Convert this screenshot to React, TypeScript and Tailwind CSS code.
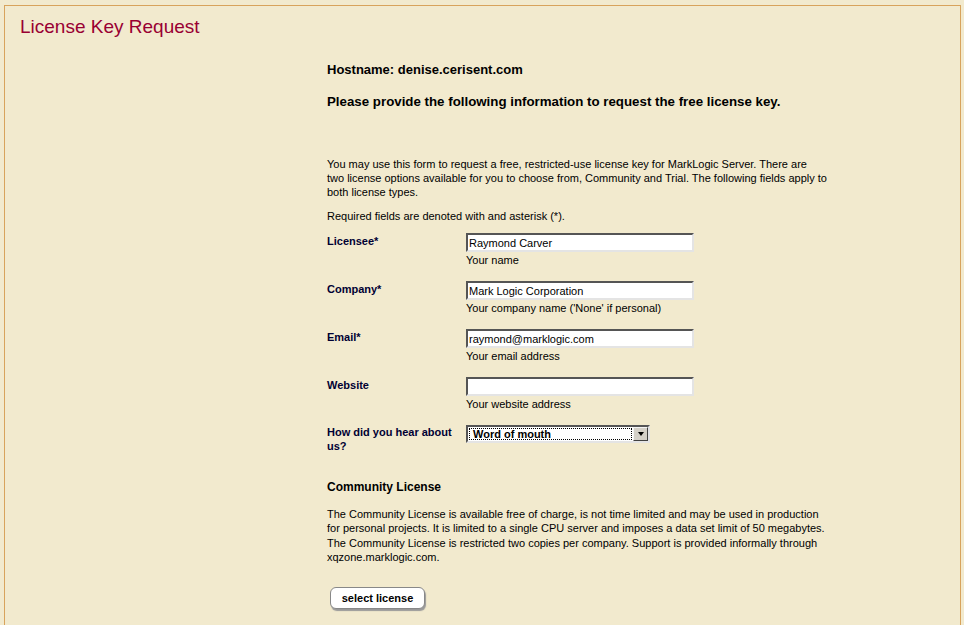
const FIELDS = [
  { label: "Licensee*", value: "Raymond Carver", help: "Your name" },
  { label: "Company*", value: "Mark Logic Corporation", help: "Your company name ('None' if personal)" },
  { label: "Email*", value: "raymond@marklogic.com", help: "Your email address" },
  { label: "Website", value: "", help: "Your website address" },
];

export default function App() {
  return (
    <div className="min-h-screen bg-[#f2eace] pt-[5px] pl-[4px] pr-[3px] font-['Liberation_Sans',Arial,sans-serif] text-black">
      <div className="border-t border-l border-r border-[#d8a35c] h-[700px]">
        {/* titulo */}
        <h1 className="pl-[15px] pt-[9px] text-[19px] leading-[24px] text-[#990033]">License Key Request</h1>

        <main className="ml-[322px] w-[500px]">
          <p className="mt-[23px] text-[13px] leading-[16px] font-bold">Hostname: denise.cerisent.com</p>
          <p className="mt-[16px] text-[13.3px] leading-[16px] font-bold">
            Please provide the following information to request the free license key.
          </p>

          <p className="mt-[47px] text-[11px] leading-[14px]">
            You may use this form to request a free, restricted-use license key for MarkLogic Server. There are two
            license options available for you to choose from, Community and Trial. The following fields apply to both
            license types.
          </p>
          <p className="mt-[10px] text-[11px] leading-[14px]">Required fields are denoted with and asterisk (*).</p>

          {/* FORMULARIO */}
          <div className="mt-[10px]">
            {FIELDS.map((f) => (
              <div key={f.label} className="flex h-[48px]">
                <div className="w-[139px] pt-[1px] text-[11px] leading-[14px] font-bold text-[#000033]">{f.label}</div>
                <div>
                  <input
                    readOnly
                    value={f.value}
                    className="block w-[228px] h-[19px] bg-white border-2 border-t-[#555] border-l-[#555] border-r-[#e4e4e4] border-b-[#e4e4e4] px-[1px] text-[11px] leading-[14px] outline-none"
                  />
                  <div className="mt-[1px] text-[11px] leading-[14px]">{f.help}</div>
                </div>
              </div>
            ))}
            <div className="flex">
              <div className="w-[139px] text-[11px] leading-[14px] font-bold text-[#000033]">
                How did you hear about
                <br />
                us?
              </div>
              <div className="flex items-center w-[184px] h-[18px] bg-white border-2 border-t-[#555] border-l-[#555] border-r-[#e4e4e4] border-b-[#e4e4e4]">
                <div className="flex-1 mx-[1px] h-[12px] border border-dotted border-black flex items-center pl-[3px] text-[11px] font-bold bg-white">
                  Word of mouth
                </div>
                <div className="w-[15px] h-[14px] bg-[#d4d0c8] border border-t-[#f4f4f4] border-l-[#f4f4f4] border-r-[#404040] border-b-[#404040] flex items-center justify-center">
                  <div className="w-0 h-0 border-l-[3.5px] border-r-[3.5px] border-t-[4px] border-l-transparent border-r-transparent border-t-black" />
                </div>
              </div>
            </div>
          </div>

          <h2 className="mt-[26px] text-[12px] leading-[16px] font-bold">Community License</h2>
          <p className="mt-[12px] text-[11px] leading-[14.3px]">
            The Community License is available free of charge, is not time limited and may be used in production for
            personal projects. It is limited to a single CPU server and imposes a data set limit of 50 megabytes. The
            Community License is restricted two copies per company. Support is provided informally through
            xqzone.marklogic.com.
          </p>

          <button className="ml-[3px] mt-[23px] w-[95px] h-[22px] rounded-[6px] bg-white border border-[#888] shadow-[1px_2px_1px_#999] text-[11px] font-bold">
            select license
          </button>
        </main>
      </div>
    </div>
  );
}
